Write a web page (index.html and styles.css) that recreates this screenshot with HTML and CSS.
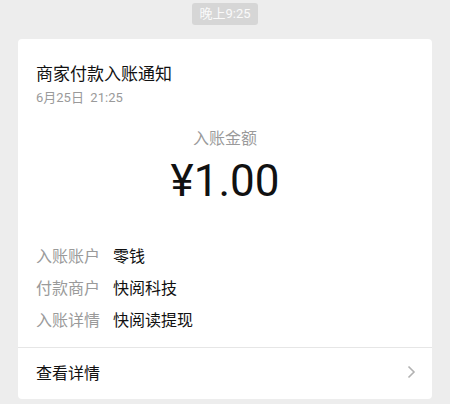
FILE: index.html
```html
<!DOCTYPE html>
<html lang="zh-CN">
<head>
    <meta charset="UTF-8">
    <meta name="viewport" content="width=device-width, initial-scale=1.0">
    <title>商家付款入账通知</title>
    <link rel="stylesheet" href="styles.css">
</head>
<body>

    <!-- Message time -->
    <div class="time-row">
        <span class="time-pill">晚上9:25</span>
    </div>

    <!-- Notification card -->
    <div class="card">
        <div class="card-body">
            <div class="card-title">商家付款入账通知</div>
            <div class="card-date">6月25日&nbsp;&nbsp;21:25</div>

            <div class="amount-label">入账金额</div>
            <div class="amount">¥1.00</div>

            <div class="info-list">
                <div class="info-row">
                    <span class="info-key">入账账户</span>
                    <span class="info-value">零钱</span>
                </div>
                <div class="info-row">
                    <span class="info-key">付款商户</span>
                    <span class="info-value">快阅科技</span>
                </div>
                <div class="info-row">
                    <span class="info-key">入账详情</span>
                    <span class="info-value">快阅读提现</span>
                </div>
            </div>
        </div>

        <div class="card-footer">
            <span>查看详情</span>
            <svg class="chevron" width="9" height="14" viewBox="0 0 9 14">
                <path d="M1.5 1.5 L7 7 L1.5 12.5" fill="none" stroke="#b2b2b2" stroke-width="1.6"/>
            </svg>
        </div>
    </div>

</body>
</html>
```

FILE: styles.css
```css
/* General styles */
body {
    margin: 0;
    padding: 0 18px;
    background-color: #ededed;
    font-family: Roboto, "Noto Sans CJK SC", sans-serif;
    color: #191919;
    height: 404px;
    overflow: hidden;
}

/* Time pill */
.time-row {
    display: flex;
    justify-content: center;
    padding-top: 3px;
}

.time-pill {
    background-color: #d6d6d6;
    color: #fafafa;
    font-size: 13px;
    line-height: 22px;
    padding: 0 7px;
    border-radius: 3px;
}

/* Card */
.card {
    margin-top: 14px;
    background-color: #fff;
    border-radius: 4px;
}

.card-body {
    padding: 23px 18px 10px 18px;
}

.card-title {
    font-size: 17px;
    line-height: 24px;
    color: #111;
}

.card-date {
    font-size: 13px;
    line-height: 18px;
    color: #9a9a9a;
    margin-top: 3px;
}

.amount-label {
    text-align: center;
    font-size: 16px;
    line-height: 20px;
    color: #9a9a9a;
    margin-top: 22px;
}

.amount {
    text-align: center;
    font-size: 44px;
    line-height: 50px;
    color: #111;
    margin-top: 7px;
}

.info-list {
    margin-top: 35px;
}

.info-row {
    display: flex;
    font-size: 16px;
    line-height: 32px;
}

.info-key {
    color: #9a9a9a;
    width: 77px;
}

.info-value {
    color: #111;
}

/* Footer link */
.card-footer {
    border-top: 1px solid #e6e6e6;
    display: flex;
    justify-content: space-between;
    align-items: center;
    padding: 0 16px 3px 18px;
    height: 48px;
    font-size: 16px;
    color: #111;
}
```
